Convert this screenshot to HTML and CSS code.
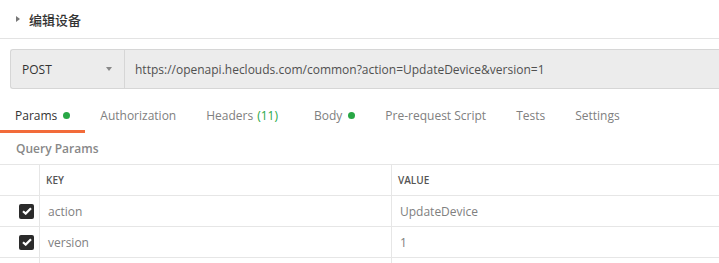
FILE: index.html
```html
<!DOCTYPE html>
<html lang="zh-CN">
<head>
  <meta charset="UTF-8">
  <title>编辑设备</title>
  <link rel="stylesheet" href="styles.css">
</head>
<body>

<!-- Заголовок запроса -->
<div class="title">
  <span class="caret"></span>
  <span class="name">编辑设备</span>
</div>

<div class="request">
  <div class="bar">
    <div class="method">
      <span>POST</span>
      <span class="arrow"></span>
    </div>
    <div class="url">https://openapi.heclouds.com/common?action=UpdateDevice&amp;version=1</div>
  </div>
</div>

<div class="tabs">
  <div class="tab active">Params <span class="dot"></span></div>
  <div class="tab">Authorization</div>
  <div class="tab">Headers <span class="count">(11)</span></div>
  <div class="tab">Body <span class="dot"></span></div>
  <div class="tab">Pre-request Script</div>
  <div class="tab">Tests</div>
  <div class="tab">Settings</div>
</div>

<div class="section">Query Params</div>

<div class="table">
  <div class="row head">
    <div class="cell check"></div>
    <div class="cell key">KEY</div>
    <div class="cell value">VALUE</div>
  </div>
  <div class="row">
    <div class="cell check"><span class="box"><svg width="10" height="8" viewBox="0 0 10 8"><path d="M1 4.2 L3.7 6.6 L9 1.2" fill="none" stroke="#fff" stroke-width="2.2"/></svg></span></div>
    <div class="cell key">action</div>
    <div class="cell value">UpdateDevice</div>
  </div>
  <div class="row">
    <div class="cell check"><span class="box"><svg width="10" height="8" viewBox="0 0 10 8"><path d="M1 4.2 L3.7 6.6 L9 1.2" fill="none" stroke="#fff" stroke-width="2.2"/></svg></span></div>
    <div class="cell key">version</div>
    <div class="cell value">1</div>
  </div>
  <div class="row">
    <div class="cell check"></div>
    <div class="cell key"></div>
    <div class="cell value"></div>
  </div>
</div>

</body>
</html>
```

FILE: styles.css
```css
body {
  font-family: "Open Sans", "Noto Sans CJK SC", sans-serif;
  margin: 0;
  padding: 0;
  background: #ffffff;
  overflow: hidden;
  color: #808080;
  font-size: 12px;
}
.title {
  display: flex;
  align-items: center;
  height: 38px;
  padding-left: 16px;
  border-bottom: 1px solid #e3e3e3;
}
.caret {
  width: 0;
  height: 0;
  border-top: 3px solid transparent;
  border-bottom: 3px solid transparent;
  border-left: 4px solid #777;
  margin-right: 9px;
}
.name {
  font-family: "Noto Sans CJK SC", sans-serif;
  font-size: 13px;
  font-weight: 500;
  color: #333;
}
.request {
  padding: 10px 0 0 10px;
}
.bar {
  display: flex;
  height: 38px;
  background: #ececec;
  border: 1px solid #d6d6d6;
  border-right: none;
  border-radius: 3px 0 0 3px;
}
.method {
  width: 114px;
  box-sizing: border-box;
  display: flex;
  align-items: center;
  justify-content: space-between;
  padding: 0 12px 0 11px;
  border-right: 1px solid #d6d6d6;
  color: #333;
  font-size: 12px;
}
.arrow {
  width: 0;
  height: 0;
  border-left: 3.5px solid transparent;
  border-right: 3.5px solid transparent;
  border-top: 4px solid #888;
}
.url {
  display: flex;
  align-items: center;
  padding-left: 10px;
  color: #505050;
}
.tabs {
  display: flex;
  margin-top: 12px;
  height: 32px;
}
.tab {
  display: flex;
  align-items: center;
  padding: 0 15px;
  height: 29px;
  border-bottom: 3px solid transparent;
  color: #808080;
}
.tab.active {
  color: #333;
  border-bottom-color: #f26b3a;
}
.dot {
  display: inline-block;
  width: 7px;
  height: 7px;
  border-radius: 50%;
  background: #28a745;
  margin-left: 6px;
}
.count {
  color: #28a745;
  margin-left: 4px;
  margin-right: 6px;
}
.section {
  height: 31px;
  line-height: 31px;
  padding-left: 16px;
  font-weight: 600;
  color: #888;
}
.table {
  border-top: 1px solid #e6e6e6;
}
.row {
  display: flex;
  height: 30px;
  border-bottom: 1px solid #e6e6e6;
}
.cell {
  display: flex;
  align-items: center;
  box-sizing: border-box;
}
.check {
  width: 40px;
  border-right: 1px solid #e6e6e6;
  justify-content: flex-end;
  padding-right: 5px;
}
.key {
  width: 352px;
  border-right: 1px solid #e6e6e6;
  padding-left: 8px;
}
.value {
  flex: 1;
  padding-left: 8px;
}
.head .cell {
  font-size: 10px;
  font-weight: 600;
  color: #555;
}
.head .key, .head .value {
  padding-left: 6px;
}
.box {
  display: flex;
  align-items: center;
  justify-content: center;
  width: 15px;
  height: 15px;
  border-radius: 2px;
  background: #2b2b2b;
}
```
